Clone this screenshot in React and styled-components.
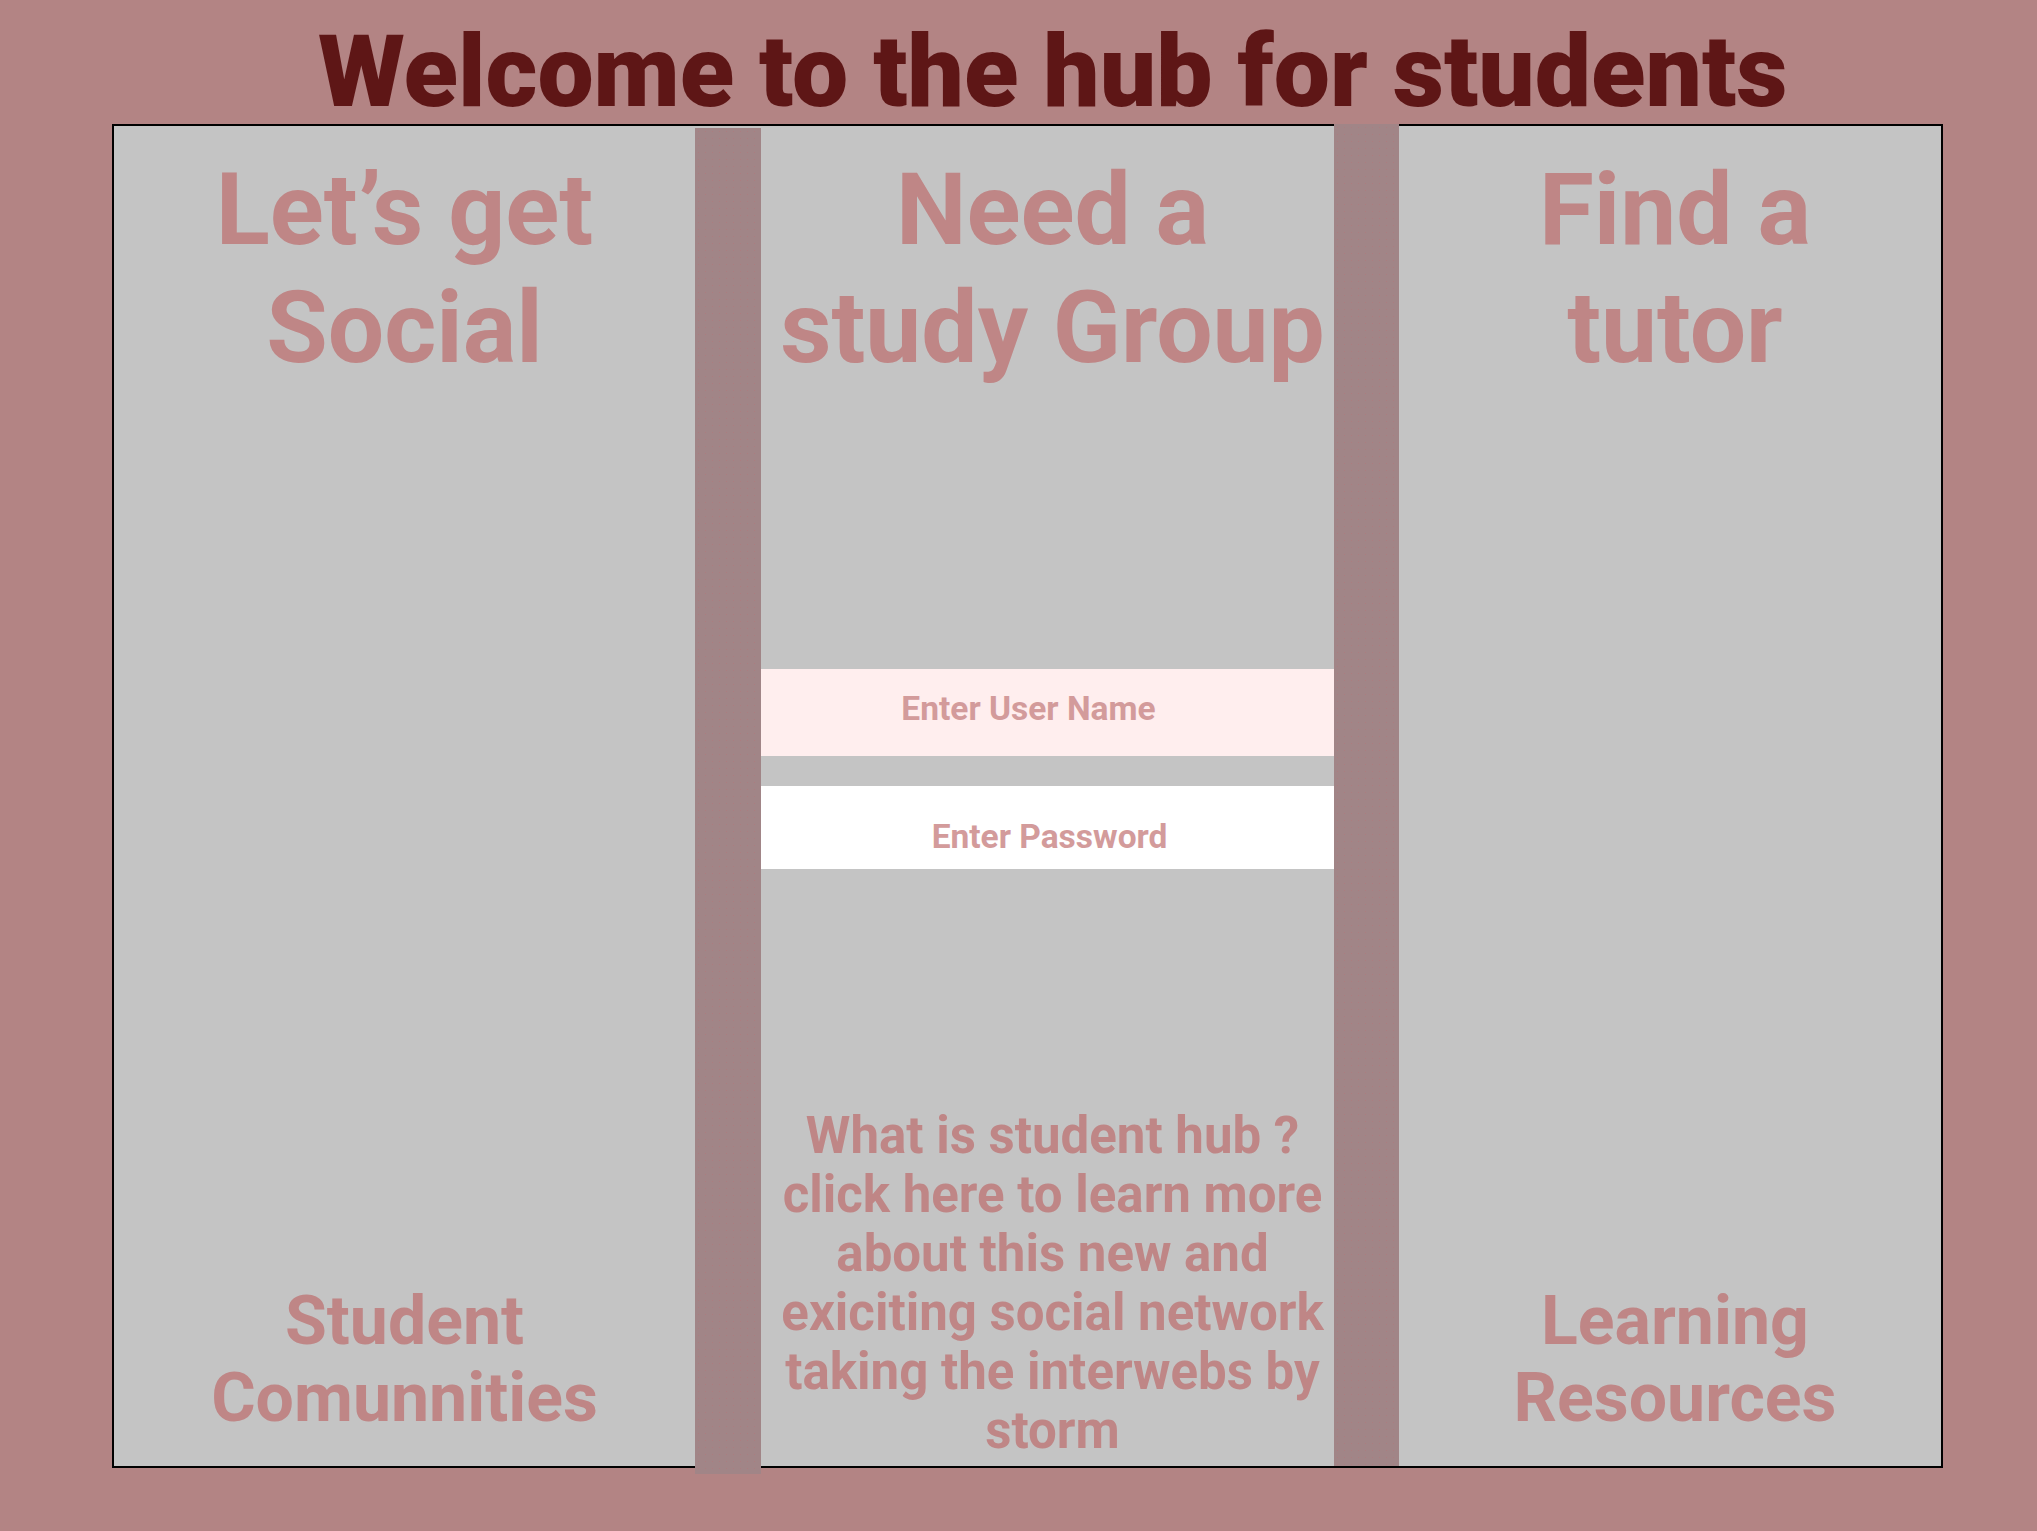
import React from "react";
import styled, { createGlobalStyle } from "styled-components";

const GlobalStyle = createGlobalStyle`
  html, body {
    margin: 0;
    padding: 0;
    background: #b38484;
  }
  * {
    box-sizing: border-box;
  }
`;

const Page = styled.div`
  min-height: 1531px;
  background: #b38484;
  font-family: Roboto, "Noto Sans", sans-serif;
  padding-top: 22px;
`;

const Title = styled.h1`
  margin: 0 0 2px 0;
  padding-left: 318px;
  font-size: 100px;
  line-height: 100px;
  font-weight: 900;
  color: #5e1616;
  white-space: nowrap;
`;

const Board = styled.main`
  margin-left: 112px;
  width: 1831px;
  height: 1344px;
  border: 2px solid #000;
  background: #c4c4c4;
  display: grid;
  grid-template-columns: 581px 66px 573px 65px 542px;
`;

const Divider = styled.div`
  background-color: #a18587;
  background-image: radial-gradient(rgba(190, 110, 115, 0.35) 0.8px, transparent 1px);
  background-size: 7px 7px;
  margin-top: ${(p) => p.$top}px;
  margin-bottom: ${(p) => p.$bottom}px;
`;

const Column = styled.section`
  display: flex;
  flex-direction: column;
  align-items: center;
  text-align: center;
  padding: 25px ${(p) => p.$right || 0}px ${(p) => p.$bottom}px
    ${(p) => p.$left || 0}px;
  color: #bf8686;
`;

const Heading = styled.h2`
  margin: 0;
  font-size: 100px;
  line-height: 118px;
  font-weight: 700;
  white-space: nowrap;
`;

const Footer = styled.h3`
  margin: auto 0 0 0;
  font-size: 68px;
  line-height: 77px;
  font-weight: 700;
`;

const Form = styled.form`
  width: 573px;
  margin: 282px 0 0 -10px;
  align-self: flex-start;
  display: flex;
  flex-direction: column;
  gap: 30px;
`;

const Field = styled.input`
  display: block;
  width: 100%;
  height: ${(p) => p.$height}px;
  border: none;
  outline: none;
  margin: 0;
  background: ${(p) => p.$bg};
  padding: ${(p) => p.$pad};
  text-align: center;
  font-family: Roboto, "Noto Sans", sans-serif;
  font-size: 33.5px;
  font-weight: 700;
  color: #d39b9b;
  &::placeholder {
    color: #d39b9b;
    opacity: 1;
  }
`;

const About = styled.p`
  margin: auto 0 0 0;
  font-size: 51px;
  line-height: 59px;
  font-weight: 700;
`;

export default function App() {
  return (
    <Page>
      <GlobalStyle />
      <Title>Welcome to the hub for students</Title>
      <Board>
        <Column $bottom={29}>
          <Heading>
            Let’s get
            <br />
            Social
          </Heading>
          <Footer>
            Student
            <br />
            Comunnities
          </Footer>
        </Column>
        <Divider $top={2} $bottom={-8} />
        <Column $bottom={6} $left={10} $right={0}>
          <Heading>
            Need a
            <br />
            study Group
          </Heading>
          <Form onSubmit={(e) => e.preventDefault()}>
            <Field
              type="text"
              placeholder="Enter User Name"
              $height={87}
              $bg="#ffeeee"
              $pad="0 38px 9px 0"
            />
            <Field
              type="password"
              placeholder="Enter Password"
              $height={83}
              $bg="#ffffff"
              $pad="17px 0 0 4px"
            />
          </Form>
          <About>
            What is student hub ? click here to learn more about this new and
            exiciting social network taking the interwebs by storm
          </About>
        </Column>
        <Divider $top={-2} $bottom={0} />
        <Column $bottom={29} $left={10}>
          <Heading>
            Find a
            <br />
            tutor
          </Heading>
          <Footer>
            Learning
            <br />
            Resources
          </Footer>
        </Column>
      </Board>
    </Page>
  );
}
